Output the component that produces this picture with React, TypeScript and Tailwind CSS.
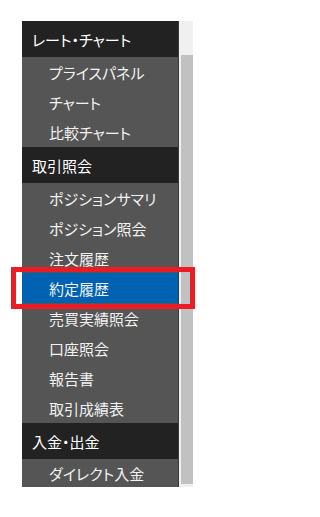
const sections = [
  { title: 'レート・チャート', items: ['プライスパネル', 'チャート', '比較チャート'] },
  {
    title: '取引照会',
    items: ['ポジションサマリ', 'ポジション照会', '注文履歴', '約定履歴', '売買実績照会', '口座照会', '報告書', '取引成績表'],
  },
  { title: '入金・出金', items: ['ダイレクト入金'] },
];

const ACTIVE = '約定履歴';

export default function App() {
  return (
    <div className="min-h-[517px] bg-white pl-[22px] pt-[21px] font-['Noto_Sans_CJK_JP',sans-serif] text-[15px] [font-feature-settings:'palt']">
      <div className="flex h-[466px] w-[171px]">
        <nav className="flex w-[157px] flex-col border-r border-[#3b3b3b] bg-[#555555]">
          {sections.map((section, si) => (
            <div key={section.title}>
              <div className="flex h-[36px] items-center bg-[#222222] pl-[10px] pt-[3px] text-white">
                {section.title}
              </div>
              {section.items.map((item, ii) => {
                const last = si === sections.length - 1 && ii === section.items.length - 1;
                const active = item === ACTIVE;
                return (
                  <div
                    key={item}
                    className={`relative flex items-center pl-[27px] pt-[2px] text-[#f2f2f2] ${
                      last ? 'h-[28px]' : 'h-[30px]'
                    } ${active ? 'bg-[#0062b0]' : ''}`}
                  >
                    {item}
                    {active && (
                      <div className="pointer-events-none absolute -top-[6px] -right-[17px] -bottom-[6px] -left-[11px] z-10 border-[5px] border-[#ea1c24]" />
                    )}
                  </div>
                );
              })}
            </div>
          ))}
        </nav>
        <div className="flex w-[14px] flex-col bg-[#f0f0f0] pt-[34px] pb-[3px] pl-[2px]">
          <div className="flex-1 bg-[#c1c1c1]" />
        </div>
      </div>
    </div>
  );
}
